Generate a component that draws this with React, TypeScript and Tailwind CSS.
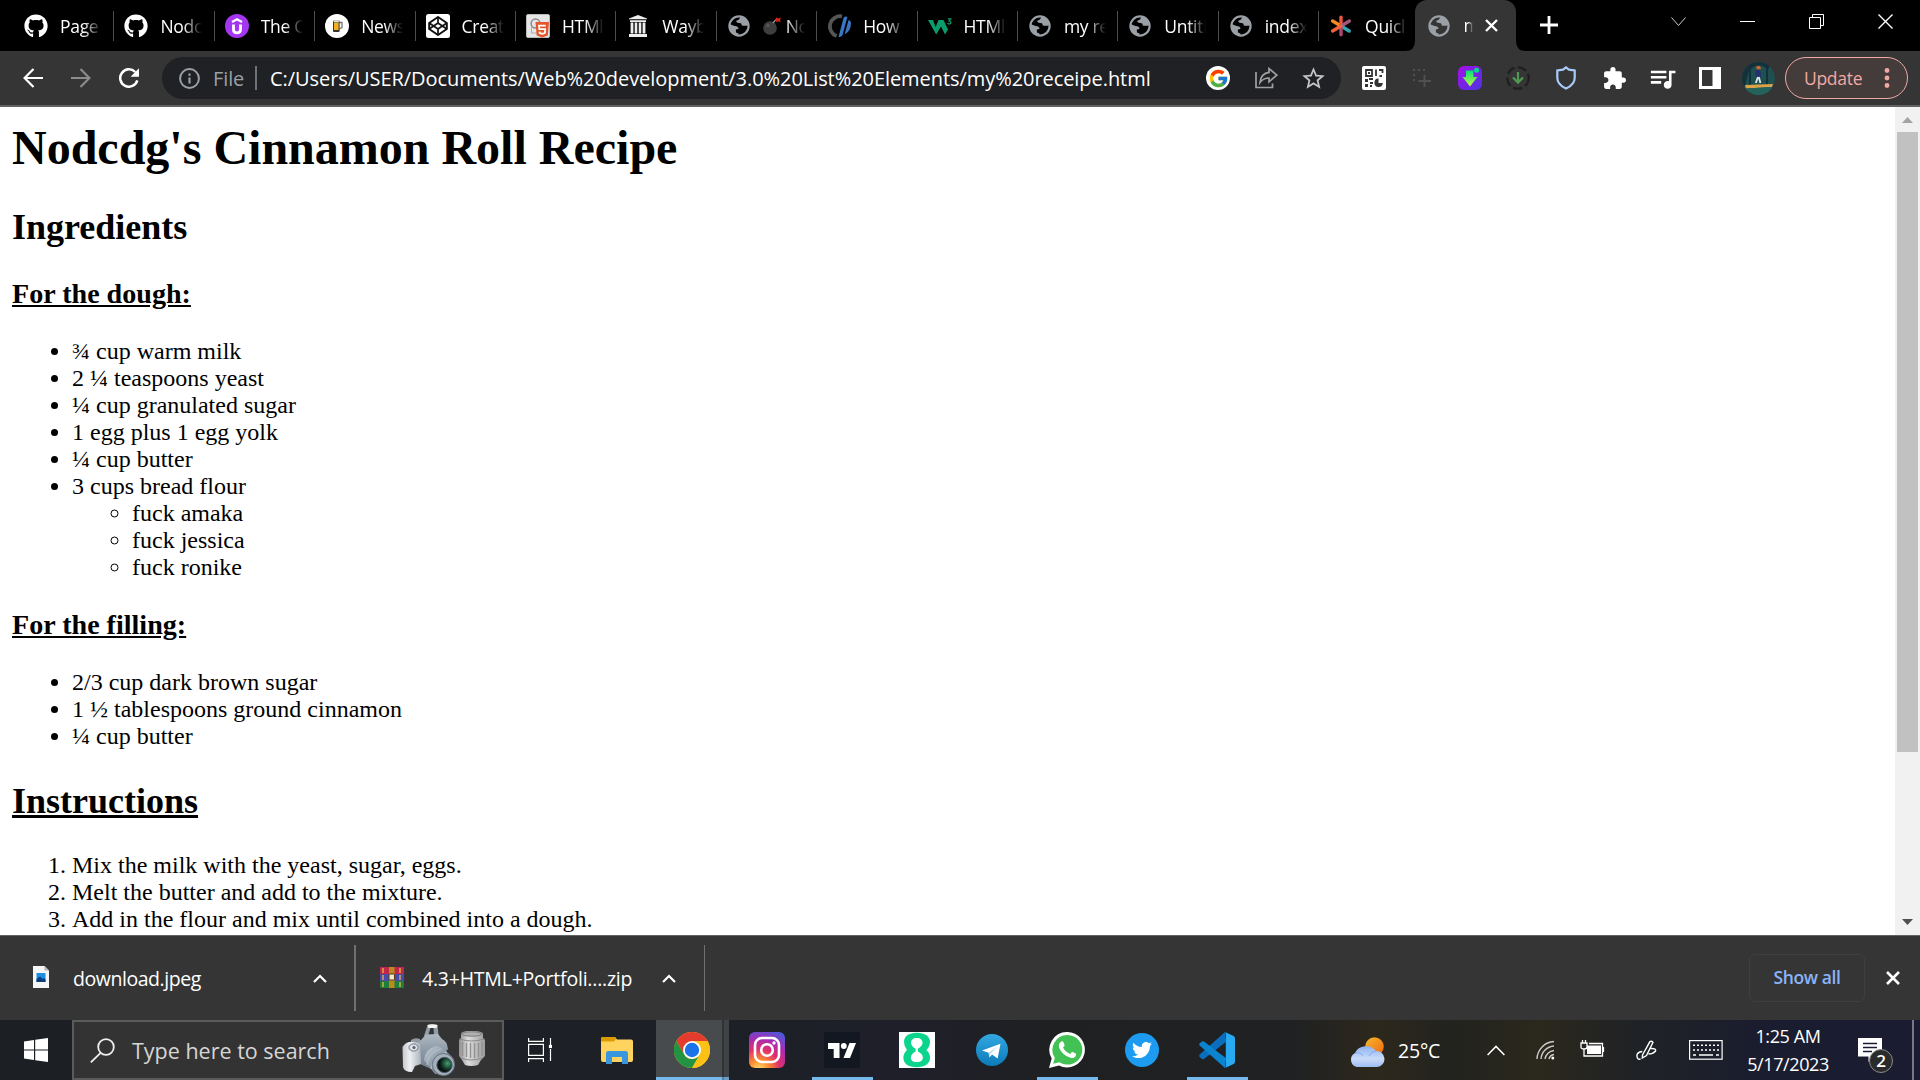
import React from "react";
import { FaGithub, FaTwitter } from "react-icons/fa";
import { FcGoogle } from "react-icons/fc";
import { MdExtension, MdQueueMusic, MdStarBorder } from "react-icons/md";

const ui = "font-['Open_Sans','Noto_Sans',sans-serif]";

function Globe() {
  return (
    <svg width="22" height="22" viewBox="0 0 22 22" fill="none">
      <circle cx="11" cy="11" r="9.6" stroke="#9aa0a6" strokeWidth="2.2" />
      <path d="M12.6 1.5 L11 4.4 L8 6 Q8.6 8.2 11.4 8 Q14 8 13.6 10.4 Q16.5 11.2 20 10.4 L19.6 6 L17 3 Z" fill="#9aa0a6" />
      <path d="M1.4 9 L6.6 11 Q10.8 11.4 10.4 14 L7.8 14.6 L8 17.6 L10.4 18.4 L10.6 21 L5 19.4 L2 15 Z" fill="#9aa0a6" />
    </svg>
  );
}

function Udemy() {
  return (
    <svg width="24" height="24" viewBox="0 0 24 24" fill="none">
      <circle cx="12" cy="12" r="12" fill="#a435f0" />
      <path d="M7 8 L12 5.2 L17 8" stroke="#fff" strokeWidth="2.2" />
      <path d="M8.5 10.5 V15.5 Q8.5 18.8 12 18.8 Q15.5 18.8 15.5 15.5 V10.5" stroke="#fff" strokeWidth="2.8" />
    </svg>
  );
}

function Beer() {
  return (
    <svg width="24" height="24" viewBox="0 0 24 24" fill="none">
      <circle cx="12" cy="12" r="12" fill="#fff" />
      <path d="M14 8.5 H17 V13.5 L14 15" stroke="#777" strokeWidth="1.3" />
      <rect x="8" y="6.5" width="6.6" height="11.5" rx="1" fill="#333" />
      <rect x="9" y="9" width="4.6" height="7" fill="#f2b01e" />
      <rect x="8.6" y="6.2" width="5.6" height="2.4" rx="1" fill="#e8dcc0" />
    </svg>
  );
}

function Pen() {
  return (
    <svg width="24" height="24" viewBox="0 0 24 24" fill="none" stroke="#111" strokeWidth="2" strokeLinejoin="round">
      <rect width="24" height="24" rx="2.5" fill="#fff" stroke="none" />
      <path d="M12 3 L20.8 9 V15 L12 21 L3.2 15 V9 Z" />
      <path d="M3.2 9 L12 15 L20.8 9 M3.2 15 L12 9 L20.8 15 M12 3 V9 M12 15 V21" strokeWidth="1.7" />
    </svg>
  );
}

function Html5() {
  return (
    <svg width="24" height="24" viewBox="0 0 24 24" fill="none">
      <rect x=".5" y=".5" width="23" height="23" rx="1.5" fill="#e6e6e6" stroke="#bbb" />
      <circle cx="9.5" cy="9.5" r="4.4" stroke="#8a8a8a" strokeWidth="1.5" />
      <path d="M5.5 12 V19 H11" stroke="#aaa" />
      <path d="M9.5 8 H23 L21.8 21.5 L16.2 23.5 L10.7 21.5 Z" fill="#e4562b" />
      <path d="M19.8 11.6 H13 L13.3 15.2 H19.2 L18.8 19 L16.2 19.9 L13.7 19 L13.6 17.6" stroke="#fff" strokeWidth="1.8" />
    </svg>
  );
}

function Archive() {
  return (
    <svg width="20" height="22" viewBox="0 0 20 22" fill="#eee">
      <path d="M1 3.4 L10 0 L19 3.4 V4.2 H1 Z M2 5.2 H18 V7 H2 Z M1 19 H19 V22 H1 Z" />
      <path d="M2.6 7.4 H5.4 V18.6 H2.6 Z M6.7 7.4 H9.3 V18.6 H6.7 Z M10.7 7.4 H13.3 V18.6 H10.7 Z M14.6 7.4 H17.4 V18.6 H14.6 Z" />
    </svg>
  );
}

function Bomb() {
  return (
    <svg width="18" height="18" viewBox="0 0 18 18" fill="none" className="mr-[5px] shrink-0">
      <circle cx="7" cy="11" r="6.8" fill="#3e3e3e" />
      <circle cx="5" cy="8.6" r="1.6" fill="#5c5c5c" />
      <path d="M10 6 L12.5 3 H14.5" stroke="#999" strokeWidth="1.2" />
      <path d="M13 .6 L15.5 1.4 L18 .4 L17 3 L17.8 5.2 L15.2 4.2 L13.2 5 Z" fill="#e2231a" />
    </svg>
  );
}

function Slashes() {
  return (
    <svg width="24" height="24" viewBox="0 0 24 24" fill="none">
      <path d="M15 2.4 A10.2 10.2 0 0 0 9.6 22" stroke="#555" strokeWidth="3.8" />
      <path d="M11.5 23 L16.5 4 Q18 1.8 20.4 3 L15.6 21 Q14.4 23.4 11.5 23 Z M17.6 20.5 L21.4 6.4 Q23.6 5.6 24 9 Q24 17 17.6 20.5 Z" fill="#3976c4" />
    </svg>
  );
}

function W3() {
  return (
    <svg width="24" height="24" viewBox="0 0 24 24" fill="none">
      <path d="M0 6 H5 L7.6 13 L10.5 6 H15.5 L20 15.5 L17 20.5 L13 12.6 L8.2 20.5 Z" fill="#0a9c6b" />
      <path d="M19.8 4.8 H22.8 L21 7 Q23.6 7.4 22.6 9.4 Q21 10.5 19.6 9.2" stroke="#0a9c6b" strokeWidth="1.2" />
    </svg>
  );
}

function Asterisk() {
  return (
    <svg width="22" height="22" viewBox="0 0 22 22" fill="none" strokeWidth="3.4" strokeLinecap="round">
      <path d="M11 11 L2.6 6" stroke="#f68b1f" />
      <path d="M11 11 V2.3" stroke="#f0563d" />
      <path d="M11 11 L19.4 6" stroke="#a3557a" />
      <path d="M11 11 L19.2 16" stroke="#2fa8b5" />
      <path d="M11 11 V19.7" stroke="#b0486e" />
      <path d="M11 11 L2.6 16" stroke="#f2603c" />
    </svg>
  );
}

const tabs: { icon: React.ReactNode; title: string; lead?: React.ReactNode }[] = [
  { icon: <FaGithub size={24} />, title: "Page" },
  { icon: <FaGithub size={24} />, title: "Nodc" },
  { icon: <Udemy />, title: "The C" },
  { icon: <Beer />, title: "News" },
  { icon: <Pen />, title: "Creat" },
  { icon: <Html5 />, title: "HTMl" },
  { icon: <Archive />, title: "Wayb" },
  { icon: <Globe />, title: "No", lead: <Bomb /> },
  { icon: <Slashes />, title: "How" },
  { icon: <W3 />, title: "HTMl" },
  { icon: <Globe />, title: "my re" },
  { icon: <Globe />, title: "Untitl" },
  { icon: <Globe />, title: "index" },
  { icon: <Asterisk />, title: "Quicl" },
];

function TabStrip() {
  return (
    <div className="flex h-[51px] bg-black pl-[14px] text-white">
      {tabs.map((t, i) => (
        <div key={i} className="flex h-[51px] w-[100.4px] shrink-0 items-center">
          <div className="ml-[10px] flex w-6 shrink-0 justify-center">{t.icon}</div>
          <div className="ml-3 flex w-[42px] items-center overflow-hidden whitespace-nowrap text-[17.5px] leading-6 tracking-[-0.3px] [mask-image:linear-gradient(to_right,black_55%,transparent_100%)]">
            {t.lead}
            {t.title}
          </div>
          <div className={i === 13 ? "hidden" : "ml-auto h-[30px] w-px bg-[#4d4d4d]"} />
        </div>
      ))}
      <div className="relative ml-[-4px] flex w-[101px] shrink-0 items-center rounded-t-[12px] bg-[#353535]">
        <svg className="absolute bottom-0 left-[-10px]" width="10" height="10"><path d="M10 0 V10 H0 Q10 10 10 0Z" fill="#353535" /></svg>
        <svg className="absolute right-[-10px] bottom-0" width="10" height="10"><path d="M0 0 V10 H10 Q0 10 0 0Z" fill="#353535" /></svg>
        <div className="ml-[13px]"><Globe /></div>
        <div className="ml-[13px] w-[10px] overflow-hidden whitespace-nowrap text-[17.5px] [mask-image:linear-gradient(to_right,black_50%,transparent_100%)]">m</div>
        <svg className="ml-[12px]" width="13" height="13" stroke="#fff" strokeWidth="2.4"><path d="M1 1 L12 12 M12 1 L1 12" /></svg>
      </div>
      <svg className="mt-[16px] ml-[24px]" width="18" height="18" stroke="#fff" strokeWidth="2.8"><path d="M9 0 V18 M0 9 H18" /></svg>
      <div className="ml-auto flex h-[43px] items-center">
        <Win><path d="M.5 3.5 L7.5 11.5 L14.5 3.5" stroke="#ccc" /></Win>
        <Win><path d="M0 7.5 H15" /></Win>
        <Win><path d="M.5 3.5 H11.5 V14.5 H.5 Z M3.5 3.5 V.5 H14.5 V11.5 H11.5" /></Win>
        <Win><path d="M.5 .5 L14.5 14.5 M14.5 .5 L.5 14.5" strokeWidth="1.4" /></Win>
      </div>
    </div>
  );
}

function Win({ children }: { children: React.ReactNode }) {
  return (
    <div className="flex w-[69px] justify-center">
      <svg width="15" height="15" fill="none" stroke="#fff">{children}</svg>
    </div>
  );
}

function Slot({ children }: { children: React.ReactNode }) {
  return <div className="flex w-12 shrink-0 items-center justify-center">{children}</div>;
}

function Toolbar() {
  return (
    <div className="flex h-[56px] items-center border-b-2 border-[#616161] bg-[#353535] pl-[9px] text-white">
      <Slot>
        <svg width="20" height="20" fill="none" stroke="#fff" strokeWidth="2.2"><path d="M20 10 H1.6 M10.5 1 L1.6 10 L10.5 19" /></svg>
      </Slot>
      <Slot>
        <svg width="20" height="20" fill="none" stroke="#8b8b8b" strokeWidth="2.2"><path d="M0 10 H18.4 M9.5 1 L18.4 10 L9.5 19" /></svg>
      </Slot>
      <Slot>
        <svg width="20" height="20" fill="none"><path d="M16.2 4 A8.7 8.7 0 1 0 18.3 12.4" stroke="#fff" strokeWidth="2.5" /><path d="M20 .3 V8.7 H11.6 Z" fill="#fff" /></svg>
      </Slot>
      <div className="ml-[9px] flex h-[42px] w-[1179px] shrink-0 items-center rounded-full bg-[#202124] pl-[17px]">
        <svg width="21" height="21" fill="none" stroke="#9aa0a6"><circle cx="10.5" cy="10.5" r="9.4" strokeWidth="2" /><path d="M10.5 9.5 V15.5 M10.5 5.5 V7.8" strokeWidth="2.2" /></svg>
        <span className="mt-px ml-[13px] w-[42px] text-[20px] tracking-[-0.1px] text-[#9aa0a6]">File</span>
        <span className="h-6 w-[2px] bg-[#6f7377]" />
        <span className="mt-px ml-[13px] w-[936px] text-[20px] tracking-[-0.06px] whitespace-nowrap">
          C:/Users/USER/Documents/Web%20development/3.0%20List%20Elements/my%20receipe.html
        </span>
        <span className="flex size-6 shrink-0 items-center justify-center rounded-full bg-white"><FcGoogle size={21} /></span>
        <svg className="ml-[25px]" width="23" height="22" fill="none" stroke="#a0a0a0" strokeWidth="1.7">
          <path d="M1 5 V20.5 H17.5 V16.5" />
          <path d="M14 1.6 L21.8 8.2 L14 14.8 V11 Q8.5 11 5 15.5 Q6 6.5 14 5.4 Z" />
        </svg>
        <MdStarBorder className="ml-[22px] text-[#c4c4c4]" size={27} />
      </div>
      <div className="ml-[9px] flex h-full">
        <Slot>
          <svg width="24" height="24" fill="none"><rect width="24" height="24" rx="2" fill="#fff" /><path d="M4 4 H10 V10 H4 Z M14 3.5 V10 M17 4 H20.5 V7 M17.5 10 H20" stroke="#333" strokeWidth="1.8" /><path d="M6 6 h2 v2 h-2z M3 13 h3 v3 h-3z M7 12 h4 v2 h-4z M3 18 h3 v3 h-3z M8 16 h3 v2 h-3z M8 19 h2 v2 h-2z" fill="#333" /><path d="M16.5 12.5 A4.2 4.2 0 1 0 20.8 17 H16.5Z" fill="#333" /></svg>
        </Slot>
        <Slot>
          <svg width="18" height="18" fill="none" stroke="#505050" strokeWidth="2"><path d="M0 1 H12" strokeDasharray="2 3" /><path d="M1 5 V13" strokeDasharray="2 3" /><path d="M11.5 6 V18 M5.5 12 H18" /></svg>
        </Slot>
        <Slot>
          <svg width="24" height="24"><defs><linearGradient id="dl" x1="0" y1="0" x2="1" y2="1"><stop stopColor="#a60fe8" /><stop offset="1" stopColor="#4a35e0" /></linearGradient><linearGradient id="ar" x1="0" y1="0" x2="0" y2="1"><stop stopColor="#00e676" /><stop offset="1" stopColor="#c3f53c" /></linearGradient></defs><rect width="24" height="24" rx="6" fill="url(#dl)" /><path d="M8 4.5 H15.5 V11 H19.5 L12 20.5 L4.5 11 H8 Z" fill="url(#ar)" /><circle cx="18.6" cy="4.2" r="2.5" fill="#00e08a" /></svg>
        </Slot>
        <Slot>
          <svg width="24" height="24" fill="none"><circle cx="12" cy="12" r="10.7" stroke="#1f1f1f" strokeWidth="2.2" strokeDasharray="9 3.5" /><path d="M12 6 V16 M7 11.5 L12 16.6 L17 11.5" stroke="#4f9a52" strokeWidth="2.2" /></svg>
        </Slot>
        <Slot>
          <svg width="20" height="24" fill="none"><path d="M10 1.4 L13 3.6 L18.7 4.4 V12 Q18.7 18.5 10 22.6 Q1.3 18.5 1.3 12 V4.4 L7 3.6 Z" stroke="#a8cbfa" strokeWidth="2.2" /></svg>
        </Slot>
        <Slot><MdExtension size={25} /></Slot>
        <Slot><MdQueueMusic size={31} /></Slot>
        <Slot>
          <svg width="22" height="22"><rect width="22" height="22" fill="#fff" /><rect x="3" y="3" width="10.5" height="16" fill="#353535" /></svg>
        </Slot>
        <Slot>
          <svg width="33" height="33"><defs><clipPath id="av"><circle cx="16.5" cy="16.5" r="16.5" /></clipPath></defs><g clipPath="url(#av)"><rect width="33" height="33" fill="#1f4f4e" /><path d="M0 0 H33 V5 L28 3 L26 8 V24 H24 V6 Q16 0 9 7 V24 H7 V8 L3 24 H0 Z" fill="#14303b" /><path d="M13.5 9 L16 7 L18.6 10 L19 15 H13.5 Z" fill="#26306e" /><path d="M14 4.5 L18 4 L19 7 L15 7.5 Z" fill="#d76a2a" /><path d="M16 15 L13.8 21 M16.8 15 L18.4 21" stroke="#dfe6ea" strokeWidth="1.8" /><path d="M3 23 L31 22 L30 25 L4 26.5 Z" fill="#dba348" /><path d="M4 26.5 L30 25 L27 33 H8 Z" fill="#24635c" /></g></svg>
        </Slot>
      </div>
      <div className="ml-[3px] flex h-[42px] w-[123px] shrink-0 items-center rounded-full border-[1.5px] border-[#f1a9a4] bg-[#443b3b] pl-[18px] text-[17.5px] text-[#f1a9a4]">
        <span className="w-[58px] tracking-[-0.3px]">Update</span>
        <svg className="ml-[22px]" width="6" height="20" fill="#f1a9a4"><circle cx="3" cy="2.5" r="2.4" /><circle cx="3" cy="10" r="2.4" /><circle cx="3" cy="17.5" r="2.4" /></svg>
      </div>
    </div>
  );
}

function Page() {
  return (
    <div className="flex h-[828px] bg-white">
      <main className="h-full flex-1 overflow-hidden px-3 pt-[13px] font-['Liberation_Serif',serif] text-[24px] leading-[27px] text-black">
        <h1 className="text-[48px] leading-[55px] font-bold">Nodcdg's Cinnamon Roll Recipe</h1>
        <h2 className="mt-8 text-[36px] leading-[41px] font-bold">Ingredients</h2>
        <h3 className="mt-[30px] text-[28.08px] leading-8 font-bold underline">For the dough:</h3>
        <ul className="mt-7 list-disc pl-[60px]">
          <li>¾ cup warm milk</li>
          <li>2 ¼ teaspoons yeast</li>
          <li>¼ cup granulated sugar</li>
          <li>1 egg plus 1 egg yolk</li>
          <li>¼ cup butter</li>
          <li>
            3 cups bread flour
            <ul className="list-[circle] pl-[60px]">
              <li>fuck amaka</li>
              <li>fuck jessica</li>
              <li>fuck ronike</li>
            </ul>
          </li>
        </ul>
        <h3 className="mt-7 text-[28.08px] leading-8 font-bold underline">For the filling:</h3>
        <ul className="mt-7 list-disc pl-[60px]">
          <li>2/3 cup dark brown sugar</li>
          <li>1 ½ tablespoons ground cinnamon</li>
          <li>¼ cup butter</li>
        </ul>
        <h2 className="mt-[31px] text-[36px] leading-[41px] font-bold underline">Instructions</h2>
        <ol className="mt-[30px] list-decimal pl-[60px]">
          <li>Mix the milk with the yeast, sugar, eggs.</li>
          <li>Melt the butter and add to the mixture.</li>
          <li>Add in the flour and mix until combined into a dough.</li>
        </ol>
      </main>
      <div className="flex w-[25px] flex-col items-center bg-[#f1f1f1]">
        <svg className="mt-[10px]" width="11" height="6" fill="#a3a3a3"><path d="M5.5 0 L11 6 H0 Z" /></svg>
        <div className="mt-[9px] h-[620px] w-[21px] bg-[#c1c1c1]" />
        <svg className="mt-auto mb-[10px]" width="11" height="6" fill="#505050"><path d="M0 0 H11 L5.5 6 Z" /></svg>
      </div>
    </div>
  );
}

function Caret() {
  return <svg width="14" height="9" fill="none" stroke="#fff" strokeWidth="2.2"><path d="M1 8 L7 2 L13 8" /></svg>;
}

function Shelf() {
  return (
    <div className="flex h-[85px] items-center border-t border-[#616161] bg-[#353535] text-[19.5px] text-white">
      <svg className="mb-[2px] ml-[33px]" width="16" height="22"><path d="M0 0 H11.5 L16 4.5 V22 H0 Z" fill="#f6f6f6" /><path d="M11.5 0 L16 4.5 H11.5 Z" fill="#b5b5b5" /><rect x="3.5" y="7" width="9" height="9" fill="#1d8fe0" /><path d="M3.5 16 V13 L7 10.5 L9.5 13 L11 12 L12.5 13.5 V16 Z" fill="#0b3c7c" /></svg>
      <span className="mt-[2px] ml-6 w-[240px] tracking-[-0.45px]">download.jpeg</span>
      <Caret />
      <span className="ml-[27px] h-[66px] w-[2px] bg-[#707070]" />
      <svg className="mb-[2px] ml-[24px]" width="24" height="21"><rect width="24" height="7" rx="1" fill="#c2274b" /><rect y="7" width="24" height="7" fill="#4a4aa8" /><rect y="14" width="24" height="7" rx="1" fill="#1f7f3a" /><path d="M3 1 V20 M20 1 V20" stroke="#d9b44a" strokeWidth="1.4" strokeDasharray="5 2" /><rect x="9" width="5.5" height="21" fill="#b98a1c" /><rect x="9" y="7" width="5.5" height="6" rx="1" fill="#f0e6c8" stroke="#5a3a10" /></svg>
      <span className="mt-[2px] ml-[18px] w-[240px] tracking-[-0.22px]">4.3+HTML+Portfoli....zip</span>
      <Caret />
      <span className="ml-[28px] h-[66px] w-px bg-[#707070]" />
      <span className="ml-auto flex h-[48px] w-[116px] items-center justify-center rounded-[6px] border border-[#3c4043] pb-[2px] text-[17.5px] font-semibold tracking-[-0.4px] text-[#8ab4f8]">Show all</span>
      <svg className="mr-5 ml-[21px]" width="14" height="14" stroke="#fff" strokeWidth="2.6"><path d="M1 1 L13 13 M13 1 L1 13" /></svg>
    </div>
  );
}

function AppButton({ children, active }: { children: React.ReactNode; active?: boolean }) {
  return (
    <div className="relative flex w-[75px] shrink-0 items-center justify-center">
      {children}
      {active && <span className="absolute bottom-0 left-[8px] h-[3px] w-[61px] bg-[#76b9ed]" />}
    </div>
  );
}

function Taskbar() {
  return (
    <div className="flex h-[60px] bg-[linear-gradient(90deg,#1c2024_0px,#1d2026_700px,#1e1f2a_900px,#1f2022_1040px,#202122_1300px,#2d281c_1375px,#22231f_1450px,#2b281c_1540px,#1f2226_1640px,#1a1c30_1780px,#1b1c31_1920px)] text-white">
      <div className="flex w-[72px] items-center justify-center">
        <svg width="24" height="24" fill="#fff"><path d="M0 3.4 L10 2 V11.4 H0 Z M11.2 1.8 L24 0 V11.4 H11.2 Z M0 12.6 H10 V22 L0 20.6 Z M11.2 12.6 H24 V24 L11.2 22.2 Z" /></svg>
      </div>
      <div className="flex w-[432px] items-center border-2 border-[#5b5b5b] bg-[#333]">
        <svg className="ml-4" width="25" height="25" fill="none" stroke="#eee" strokeWidth="1.8"><circle cx="16" cy="9" r="7.8" /><path d="M10.6 14.8 L.8 24.4" /></svg>
        <span className="mt-[3px] ml-[17px] w-[269px] text-[21.5px] text-[#d6d6d6]">Type here to search</span>
        <svg width="86" height="54" viewBox="0 0 86 54">
          <defs>
            <linearGradient id="body" x1="0" y1="0" x2="0" y2="1"><stop stopColor="#aeb9c3" /><stop offset=".5" stopColor="#8b98a5" /><stop offset="1" stopColor="#75818d" /></linearGradient>
            <linearGradient id="grip" x1="0" x2="1"><stop stopColor="#c3c9ce" /><stop offset=".4" stopColor="#eef0f2" /><stop offset="1" stopColor="#aab3bb" /></linearGradient>
            <linearGradient id="tube" x1="0" y1="0" x2="1" y2="1"><stop stopColor="#c5d0d8" /><stop offset=".5" stopColor="#8796a3" /><stop offset="1" stopColor="#5e6b78" /></linearGradient>
            <linearGradient id="len" x1="0" x2="1"><stop stopColor="#8f8f8f" /><stop offset=".35" stopColor="#dedede" /><stop offset="1" stopColor="#9b9b9b" /></linearGradient>
            <radialGradient id="gl" cx=".7" cy=".4"><stop stopColor="#4d9b70" /><stop offset=".5" stopColor="#1e5a40" /><stop offset="1" stopColor="#0c1512" /></radialGradient>
          </defs>
          <path d="M23 13 L26.5 2 Q31 .5 36.5 2 L37.5 12 L33 12 L32.5 5 L29.5 5 L27 13 Z" fill="#929ca6" />
          <path d="M26.5 2 Q31 .5 36.5 2 L35.5 5 H27.5 Z" fill="#f4f4f4" />
          <path d="M12 20 L20 17 L25 11.5 L37 11 L41 16 Q46 18 47 26 L30 46 L19 41 L14 42 Z" fill="url(#body)" />
          <path d="M10 17 Q14 14 19 16 L19 19 L10 19 Z" fill="#8f9aa5" />
          <path d="M1.5 24 Q5 18 13 19 L19 21 L20 41 L14 43 L11 49 Q3 49 2 44 Z" fill="url(#grip)" />
          <ellipse cx="12.5" cy="24.5" rx="4.6" ry="3.6" fill="#dde1e5" stroke="#6e7882" /><circle cx="13" cy="24.5" r="1.6" fill="#596470" />
          <path d="M23 37 Q24 26 35 23 Q41 23 53 36 L46 52 L34 51 Z" fill="url(#tube)" />
          <path d="M26 42 Q27 29 40 26 M30 46 Q32 33 46 29" stroke="#b6c3cd" fill="none" />
          <circle cx="42.5" cy="41.5" r="11" fill="#a4b1bc" stroke="#65727e" /><circle cx="43.5" cy="42" r="7.6" fill="url(#gl)" stroke="#46525c" />
          <path d="M60 11 Q60 8 70.5 8 Q82 8 82 11 V15 L84 17 V33 L80 37 L77 42 Q70 44 64 42 L61 37 L58 33 V17 L60 15 Z" fill="url(#len)" />
          <path d="M58.5 16 Q70 20 83.5 16 M60 35 Q70 39 81 35" stroke="#8a8a8a" fill="none" /><path d="M61.5 19 V33 M65.5 20 V34 M69.5 20 V35 M73.5 20 V35 M77.5 20 V34 M81 19 V33" stroke="#929292" strokeWidth="1.4" />
          <ellipse cx="70.8" cy="11" rx="10" ry="2.2" fill="#b0b0b0" stroke="#7d7d7d" />
        </svg>
      </div>
      <div className="flex w-[75px] items-center justify-center pr-[3px]">
        <svg width="24" height="24" fill="none" stroke="#fff" strokeWidth="1.2"><path d="M.6 0 V3.4 H15.4 V0 M.6 24 V20.6 H15.4 V24 M.6 6.4 H15.4 V17.4 H.6 Z M22.5 0 V7 M22.5 11 V23" /><rect x="21.5" y="7.5" width="2" height="2" fill="#fff" /></svg>
      </div>
      <AppButton>
        <svg width="32" height="27"><path d="M0 2 Q0 0 2 0 H14 L16 2.5 H30 Q32 2.5 32 4.5 V23 Q32 25 30 25 H2 Q0 25 0 23 Z" fill="#ffd45e" /><path d="M0 4.5 V2 Q0 0 2 0 H13 Q15 0 15 2 L13 4.5 Z" fill="#dd9b02" /><path d="M5 27 V16.5 Q5 14 7.5 14 H24.5 Q27 14 27 16.5 V27 H21 V20 H11 V27 Z" fill="#3a96dd" /></svg>
      </AppButton>
      <div className="flex w-[75px] pl-[2px]">
        <div className="flex w-[66px] items-center justify-center border-b-[3px] border-[#76b9ed] bg-[#484b4e] pt-[3px] pl-[6px]">
          <svg width="36" height="36" viewBox="0 0 48 48"><circle cx="24" cy="24" r="24" fill="#fbc116" /><path d="M24 12 H44.8 A24 24 0 0 0 3.2 12 L13.6 30 Z" fill="#e33b2e" /><path d="M3.2 12 L13.6 30 A12 12 0 0 0 34.4 30 L24 48 A24 24 0 0 1 3.2 12 Z" fill="#229342" /><path d="M24 12 H44.8 A24 24 0 0 1 24 48 L34.4 30 Z" fill="#fbc116" /><circle cx="24" cy="24" r="12" fill="#fff" /><circle cx="24" cy="24" r="9.6" fill="#1a73e8" /></svg>
        </div>
        <div className="h-full w-[2px] border-b-[3px] border-[#56809f] bg-[#303236]" />
        <div className="h-full w-[5px] border-b-[3px] border-[#679dc8] bg-[#404346]" />
      </div>
      <AppButton>
        <svg width="36" height="36" fill="none"><defs><radialGradient id="ig" cx=".28" cy="1.05" r="1.15"><stop stopColor="#fee070" /><stop offset=".25" stopColor="#fb8a2f" /><stop offset=".5" stopColor="#e1306c" /><stop offset=".75" stopColor="#a92bb4" /><stop offset="1" stopColor="#5058d8" /></radialGradient></defs><rect width="36" height="36" rx="6" fill="url(#ig)" /><rect x="6" y="6" width="24" height="24" rx="7" stroke="#fff" strokeWidth="2.6" /><circle cx="18" cy="18" r="5.8" stroke="#fff" strokeWidth="2.6" /><circle cx="25" cy="11" r="1.7" fill="#fff" /></svg>
      </AppButton>
      <AppButton active>
        <svg width="36" height="36"><rect width="36" height="36" fill="#131722" /><path d="M4 11 H15.5 V26 H9.7 V17 H4 Z M25.5 11 H32 L26 26 H19.5 Z" fill="#fff" /><circle cx="19.8" cy="14" r="2.9" fill="#fff" /></svg>
      </AppButton>
      <AppButton>
        <svg width="36" height="36"><rect width="36" height="36" fill="#fff" /><path d="M17.8 .8 C26 .8 31 4.5 31 10 Q31 14.5 27.4 18 Q31 21 31 26 C31 31.5 26 35.2 17.8 35.2 C9 35.2 4.4 31.5 4.4 26 Q4.4 21 8 18 Q5 14.5 5 10 C5 4.5 9.5 .8 17.8 .8 Z" fill="#0bd48d" /><path d="M17.8 6 C21.5 6 23.6 8 23.6 11 Q23.2 14 18.8 16.8 V19.4 Q23.6 21.5 23.9 25.4 C23.9 28.4 21.5 30 17.8 30 C14 30 11.8 28.4 11.8 25.4 Q12.2 21.5 16.6 19.4 V16.8 Q12.2 14 12 11 C12 8 14 6 17.8 6 Z" fill="#fff" /></svg>
      </AppButton>
      <AppButton>
        <svg width="32" height="32"><defs><linearGradient id="tg" x1="0" y1="0" x2="0" y2="1"><stop stopColor="#32a8e0" /><stop offset="1" stopColor="#0c7bb9" /></linearGradient></defs><circle cx="16" cy="16" r="16" fill="url(#tg)" /><path d="M6 16.5 L24.5 9.8 L21.6 24.6 L16 20.6 L13.5 23.4 L12.6 18.8 Z" fill="#fff" /><path d="M12.6 18.8 L21.5 12.4 L14.4 19.8 L13.5 23.4 Z" fill="#b9d9ec" /></svg>
      </AppButton>
      <AppButton active>
        <svg width="36" height="36"><path d="M18.3 0 A17.7 17.7 0 1 1 10 33.4 L0 36 L2.7 26.5 A17.7 17.7 0 0 1 18.3 0 Z" fill="#fff" /><path d="M18.3 3 A14.8 14.8 0 1 1 10.4 30.2 L4.2 31.8 L5.8 25.8 A14.8 14.8 0 0 1 18.3 3 Z" fill="#42c155" /><path d="M12.2 9.6 Q13.8 8.8 14.5 10.3 L15.6 13.2 Q15.8 14 14 15.6 Q16.5 20.3 21.2 22 Q23 19.6 23.6 19.9 L26.8 21.5 Q27.4 22 26.5 24.4 Q24.5 26.6 21.5 25.8 Q13.5 23.5 10.2 16 Q8.9 12 12.2 9.6 Z" fill="#fff" /></svg>
      </AppButton>
      <AppButton>
        <span className="flex size-[34px] items-center justify-center rounded-full bg-[#1d9bf0]"><FaTwitter size={20} /></span>
      </AppButton>
      <AppButton active>
        <svg width="36" height="36"><path d="M26 0 L26.8 10 L5 27 Q3.4 27.6 2.4 26.6 L.6 24.9 Q-.3 23.8 .7 22.6 Z" fill="#0a6ebd" /><path d="M26 36 L26.8 26 L5 9.4 Q3.4 8.8 2.4 9.7 L.6 11.4 Q-.3 12.6 .7 13.6 Z" fill="#0b84d0" /><path d="M26 0 L34.6 4 Q36 4.8 36 6.5 V29.5 Q36 31.2 34.6 32 L26 36 Q26.8 35.5 26.8 33.5 V2.5 Q26.8 .8 26 0 Z" fill="#27aaf2" /></svg>
      </AppButton>
      <div className="ml-[95px] flex items-center">
        <svg className="mt-1" width="36" height="31"><defs><linearGradient id="cl" x1="0" y1="0" x2="0" y2="1"><stop stopColor="#8eb3f2" /><stop offset=".6" stopColor="#c9dbf8" /><stop offset="1" stopColor="#9fbdf3" /></linearGradient><linearGradient id="sun" x1="0" y1="0" x2="1" y2="1"><stop stopColor="#f5b72c" /><stop offset="1" stopColor="#ef6a12" /></linearGradient></defs><circle cx="25.5" cy="9.5" r="9.3" fill="url(#sun)" /><path d="M8 30 A7.5 7.5 0 0 1 6 16 A12 11 0 0 1 27 14 A8 8 0 0 1 28 30 Z" fill="url(#cl)" /><path d="M6 16 Q11 14.5 14 18.5 M20 19 Q22 14.5 27 14" stroke="#86a9ea" fill="none" /></svg>
        <span className="mt-[2px] ml-[13px] w-[89px] text-[19.5px] tracking-[-0.2px]">25°C</span>
        <svg width="18" height="11" fill="none" stroke="#fff" strokeWidth="1.5"><path d="M.6 10 L9 1.4 L17.4 10" /></svg>
        <svg className="ml-[31px]" width="19" height="20" fill="none" stroke="#ccc" strokeWidth="1.4"><path d="M1 19 A18 18 0 0 1 18 1.5 M5 19 A14 14 0 0 1 18 6 M9 19 A10 10 0 0 1 18 10.5 M13 19 A6 6 0 0 1 18 14.5" /><circle cx="16.8" cy="18" r="1.5" fill="#fff" stroke="none" /></svg>
        <svg className="mb-[3px] ml-[25px]" width="25" height="17" fill="none" stroke="#fff" strokeWidth="1.3"><path d="M1 3 H7 V7 Q7 9 4 9 Q1 9 1 7 Z M2.5 0 V3 M5.5 0 V3 M4 9 V16 H22.5 V3.5 H9 M23.5 7 V12" /><rect x="7" y="5.5" width="14" height="8.5" fill="#fff" stroke="none" /></svg>
        <svg className="ml-[31px]" width="21" height="21" fill="none" stroke="#fff" strokeWidth="1.4"><path d="M6.5 15 L13.8 1.8 Q15.5 .3 17 2.4 L10.5 15.5 L6.3 18 Z M6.3 11.5 Q1 12 .9 15.8 Q1.2 20 4.5 19 M14 8.5 Q20.5 8 19.6 11 Q17 14 12.5 14" /></svg>
        <svg className="mb-[1px] ml-[32px]" width="34" height="20" fill="none" stroke="#fff" strokeWidth="1.2"><rect x=".6" y=".6" width="32.5" height="18.6" /><path d="M4 5.2 H30 M4 10 H30" strokeDasharray="2 2" strokeWidth="1.4" /><path d="M4 15 H7 M10 15 H24 M27 15 H30" strokeWidth="1.5" /></svg>
      </div>
      <div className="ml-[19px] flex w-[92px] flex-col items-center text-[18px] leading-[28px] tracking-[-0.4px]">
        <span className="mt-[2px] whitespace-nowrap">1:25 AM</span>
        <span className="whitespace-nowrap">5/17/2023</span>
      </div>
      <div className="relative ml-[24px] w-[53px] pt-[18px]">
        <svg width="24" height="25"><path d="M0 0 H24 V18.5 H15 L10.5 24 V18.5 H0 Z" fill="#fff" /><path d="M5 5.5 H19 M5 9.5 H19 M5 13.5 H14" stroke="#1b1c31" strokeWidth="1.3" /></svg>
        <span className="absolute top-[29px] left-[11px] flex size-6 items-center justify-center rounded-full border-[1.5px] border-[#8b8b8b] bg-[#2b2b2b] text-[17px] font-semibold">2</span>
      </div>
      <div className="ml-auto w-[8px] border-l-2 border-[#777985]" />
    </div>
  );
}

export default function App() {
  return (
    <div className={`h-[1080px] w-[1920px] overflow-hidden ${ui}`}>
      <TabStrip />
      <Toolbar />
      <Page />
      <Shelf />
      <Taskbar />
    </div>
  );
}
